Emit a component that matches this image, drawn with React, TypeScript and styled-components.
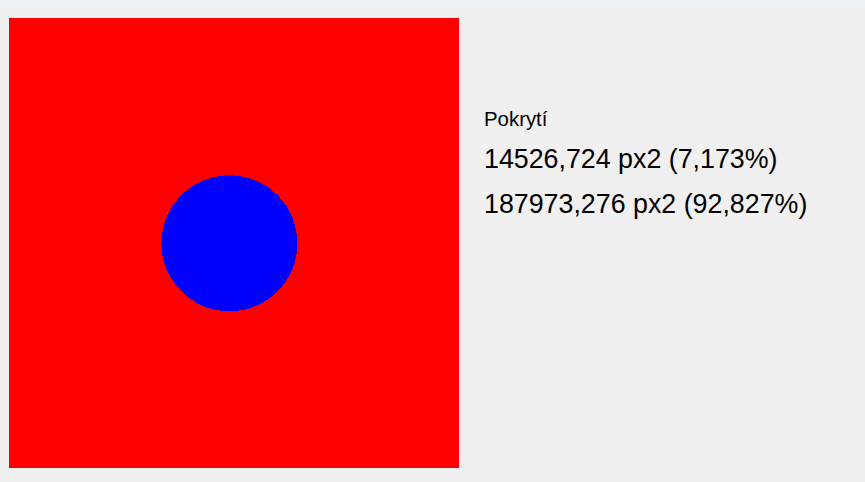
import React from "react";
import styled, { createGlobalStyle } from "styled-components";

const GlobalStyle = createGlobalStyle`
  html, body {
    margin: 0;
    padding: 0;
    background: #f0f0f0;
    font-family: "Liberation Sans", Arial, sans-serif;
    color: #000;
  }
`;

const Page = styled.div`
  display: flex;
  flex-direction: column;
  min-height: 482px;
`;

const TopBar = styled.div`
  height: 6px;
  background: #edf2f9;
`;

const Main = styled.div`
  display: flex;
  align-items: flex-start;
  gap: 25px;
  padding: 12px 0 0 9px;
`;

const Canvas = styled.svg`
  display: block;
  width: 450px;
  height: 450px;
  flex: none;
`;

const Info = styled.div`
  display: flex;
  flex-direction: column;
  padding-top: 89px;
`;

const Label = styled.div`
  font-size: 20.4px;
  line-height: 24px;
  margin-bottom: 6px;
`;

const Value = styled.div`
  font-size: 26.8px;
  line-height: 45px;
  white-space: nowrap;
`;

export default function App() {
  return (
    <>
      <GlobalStyle />
      <Page>
        <TopBar />
        <Main>
          <Canvas viewBox="0 0 450 450" shapeRendering="crispEdges">
            <rect x="0" y="0" width="450" height="450" fill="#ff0000" />
            <circle cx="220.4" cy="225.3" r="68" fill="#0000ff" />
          </Canvas>
          <Info>
            <Label>Pokrytí</Label>
            <Value>14526,724 px2 (7,173%)</Value>
            <Value>187973,276 px2 (92,827%)</Value>
          </Info>
        </Main>
      </Page>
    </>
  );
}
